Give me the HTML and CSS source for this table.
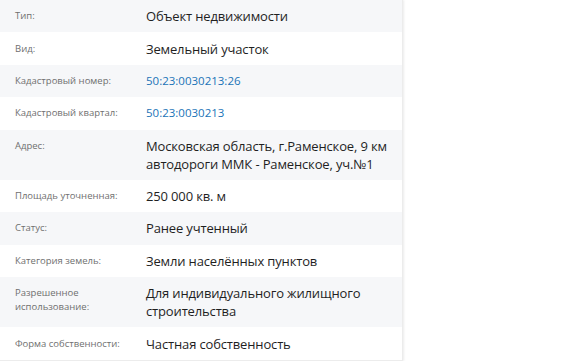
FILE: index.html
```html
<!DOCTYPE html>
<html lang="ru">
<head>
<meta charset="utf-8">
<link rel="stylesheet" href="styles.css">
</head>
<body>
<div class="panel">
  <div class="row"><div class="label">Тип:</div><div class="value">Объект недвижимости</div></div>
  <div class="row"><div class="label">Вид:</div><div class="value">Земельный участок</div></div>
  <div class="row"><div class="label">Кадастровый номер:</div><div class="value link">50:23:0030213:26</div></div>
  <div class="row"><div class="label">Кадастровый квартал:</div><div class="value link">50:23:0030213</div></div>
  <div class="row"><div class="label">Адрес:</div><div class="value">Московская область, г.Раменское, 9 км автодороги ММК - Раменское, уч.№1</div></div>
  <div class="row"><div class="label">Площадь уточненная:</div><div class="value">250 000 кв. м</div></div>
  <div class="row"><div class="label">Статус:</div><div class="value">Ранее учтенный</div></div>
  <div class="row"><div class="label">Категория земель:</div><div class="value">Земли населённых пунктов</div></div>
  <div class="row"><div class="label">Разрешенное использование:</div><div class="value">Для индивидуального жилищного строительства</div></div>
  <div class="row"><div class="label">Форма собственности:</div><div class="value">Частная собственность</div></div>
</div>
</body>
</html>
```
FILE: styles.css
```css
html, body {
  margin: 0;
  padding: 0;
  background: #ffffff;
}
body {
  font-family: "Open Sans", "Noto Sans", sans-serif;
}
.panel {
  width: 402px;
  background: #fff;
  box-shadow: 1px 0 2px rgba(0, 0, 0, 0.08);
  border-right: 1px solid #ececec;
  border-bottom: 1px solid #ececec;
}
.row {
  display: grid;
  grid-template-columns: 131px 1fr;
  padding: 7.2px 12px 7.2px 15px;
}
.row:nth-child(odd) {
  background: #f6f7f9;
}
.label {
  font-size: 9.5px;
  line-height: 14px;
  color: #6f6f6f;
  padding-top: 2px;
  padding-right: 20px;
}
.value {
  font-size: 13px;
  letter-spacing: -0.15px;
  line-height: 18px;
  color: #1f1f1f;
}
.link {
  color: #1a73b7;
  font-size: 11.5px;
  letter-spacing: 0;
}
```
